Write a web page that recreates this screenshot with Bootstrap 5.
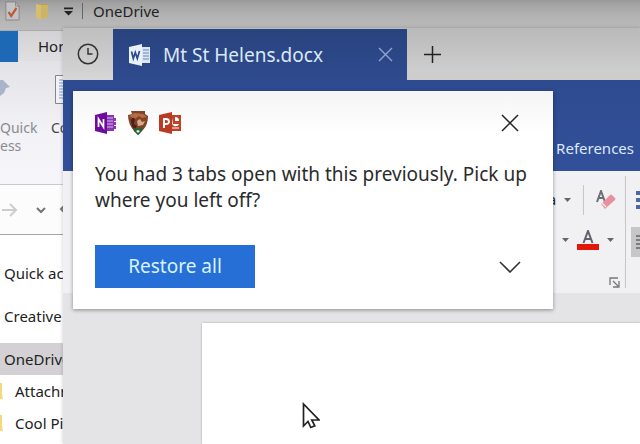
<!DOCTYPE html>
<html lang="en">
<head>
<meta charset="utf-8">
<meta name="viewport" content="width=device-width, initial-scale=1">
<title>Mt St Helens.docx</title>
<link href="https://cdn.jsdelivr.net/npm/bootstrap@5.3.0/dist/css/bootstrap.min.css" rel="stylesheet">
<style>
body { font-family: "Noto Sans", "Open Sans", sans-serif; font-size: 15px; line-height: 20px; color: #222; background: #fff; }
button { font-family: inherit; padding: 0; border: 0; background: none; color: inherit; }
svg { display: block; flex: none; }
.desktop { min-height: 100vh; }
.ex-title { height: 30px; padding: 0 1px 8px; background: linear-gradient(#989898, #a2a2a2 12%, #b2b2b2 50%, #bcbcbc); }
.ex-title .sep { width: 1px; height: 16px; background: #666; margin: 0 10px 0 9px; }
.ex-tabs { height: 31px; border-top: 1px solid #aaa; background: linear-gradient(#d2d2d4, #e0e0e4); }
.ex-file { width: 18px; height: 31px; background: #1e69b5; }
.ex-home { margin-left: 20px; }
.ex-ribbon { height: 124px; padding-top: 14px; background: linear-gradient(#e2e2e7, #f2f2f7 60%, #f6f6fa); border-bottom: 1px solid #c9c9cd; font-size: 14px; }
.ex-ribbon .pin { color: #8b8b8f; line-height: 18px; width: 38px; }
.ex-ribbon .copy { margin-left: 13px; line-height: 18px; color: #444; }
.ex-ribbon .pic { height: 44px; }
.ex-nav { height: 50px; border-bottom: 1px solid #a5a5a5; background: #fcfcfd; }
.ex-tree { padding-top: 22px; }
.ex-tree a { height: 32px; color: #222; }
.ex-tree .top { padding-left: 4px; margin-bottom: 11px; }
.ex-tree .sel { background: #d3d1d4; padding-left: 4px; }
.ex-tree .sub { gap: 12px; }
.word { position: absolute; left: 63px; top: 28px; right: 0; bottom: 0; background: #e4e4e7; box-shadow: 0 0 4px #0003; }
.strip { height: 52px; background: linear-gradient(#b9b9b9, #cdcdcd 80%, #cfcdcc); }
.hist { width: 50px; color: #333; background: linear-gradient(#bfbfc0, #d6d6d6); }
.doc-tab { width: 294px; margin-top: 1px; padding: 0 14px 0 16px; background: linear-gradient(#29437e, #2e4b8f); color: #dde8f8; font-size: 19px; }
.plus { width: 51px; color: #222; }
.w-head { height: 91px; padding: 0 6px 13px; background: linear-gradient(#2e4b90, #32509a); }
.w-head a { color: #dce9ff; }
.w-ribbon { height: 122px; padding: 5px 0; background: #f1f1f4; font-size: 14px; }
.font-group { padding: 9px 5px 0 0; }
.font-group .line { height: 30px; }
.font-group .line + .line { padding-right: 6px; }
.font-group .split { margin: 0 8px 0 12px; }
.vr-a { width: 1px; background: #c6c6c9; }
.para-group { width: 14px; padding: 15px 0 0 5px; }
.para-group .list-btn { width: 9px; height: 18px; padding-left: 5px; margin-bottom: 18px; }
.para-group .align-btn { width: 9px; height: 30px; background: #c6c6c8; padding-left: 5px; }
.sheet { margin: 30px 0 0 139px; background: #fff; box-shadow: 0 0 2px #0004; }
.toast-card { position: absolute; left: 73px; top: 91px; width: 480px; padding: 19px 22px 21px; border-radius: 0; background: linear-gradient(#f5f5f6, #fff 20%); box-shadow: 0 1px 4px #0006; color: #2b2b2b; }
.toast-card p { font-size: 19px; line-height: 26px; margin: 25px 0 32px; white-space: nowrap; }
.glyph-btn { width: 26px; }
.restore { width: 160px; height: 43px; border-radius: 0; background: #266fd6; color: #d9f3ff; font-size: 19px; }
.restore:hover { background: #1f62c2; color: #fff; }
.pointer { position: absolute; left: 302px; top: 402px; }
</style>
<script src="https://cdn.jsdelivr.net/npm/bootstrap@5.3.0/dist/js/bootstrap.bundle.min.js"></script>
</head>
<body>
<div class="desktop position-relative overflow-hidden">

<section aria-label="File Explorer">
  <header class="ex-title d-flex align-items-center">
    <svg class="ms-1" width="15" height="20" viewBox="0 0 17 20" preserveAspectRatio="none"><path d="M1 1h11l4 4v14H1z" fill="#c3c3c5" stroke="#858585"/><path d="M12 1v4h4" fill="none" stroke="#858585"/><path d="m4 11 3 4 6-8" fill="none" stroke="#bd5a2d" stroke-width="2.4"/></svg>
    <svg class="ms-3" width="12" height="19" viewBox="0 0 12 19"><path d="M2 2h10v13H2z" fill="#b89f55"/><path d="m0 2 5 1v15l-5-2z" fill="#d6bd70"/><path d="M5 3h7v13H5z" fill="#cdb366"/></svg>
    <svg class="ms-3" width="9" height="9" viewBox="0 0 10 9"><path d="M0 0h10v2H0zM0 4h10L5 9z" fill="#222"/></svg>
    <span class="sep"></span><span>OneDrive</span>
  </header>
  <nav class="ex-tabs d-flex align-items-center"><span class="ex-file"></span><a class="ex-home text-decoration-none text-reset" href="#">Home</a></nav>
  <div class="ex-ribbon d-flex">
    <div class="pin text-nowrap d-flex flex-column">
      <div class="pic"><svg width="11" height="28" viewBox="0 0 11 28"><path d="m0 5 3 0 7 7-4 1-2 5-4 3z" fill="#a9b4c8"/></svg></div>
      <span>Quick</span><span>ess</span>
    </div>
    <div class="copy">
      <div class="pic"><svg class="ms-1" width="22" height="29" viewBox="0 0 22 29"><path d="M.5.5h21v28H.5z" fill="#f2f2f5" stroke="#85868c"/><path d="M4 5h16M4 8h16M4 11h16M4 14h16M4 17h16M4 20h16M4 23h16" stroke="#a4bbdc" stroke-width="1.5"/></svg></div>
      <span>Copy</span>
    </div>
  </div>
  <div class="ex-nav d-flex align-items-center">
    <svg width="64" height="16" viewBox="0 0 64 16"><path d="M2 8h14M10 2l6 6-6 6" fill="none" stroke="#cdcdd0" stroke-width="2"/><path d="m37 6 4 4 4-4M64 4l-3 3 3 3" fill="none" stroke="#747477" stroke-width="2"/></svg>
  </div>
  <nav class="ex-tree d-flex flex-column">
    <a class="top d-flex align-items-center text-decoration-none" href="#">Quick access</a>
    <a class="top d-flex align-items-center text-decoration-none" href="#">Creative Cloud</a>
    <a class="sel d-flex align-items-center text-decoration-none" href="#">OneDrive</a>
    <a class="sub d-flex align-items-center text-decoration-none" href="#"><svg width="3" height="16" viewBox="0 0 3 16"><path d="M0 0h2v10l1 6H0z" fill="#f5d97f"/></svg>Attachments</a>
    <a class="sub d-flex align-items-center text-decoration-none" href="#"><svg width="3" height="16" viewBox="0 0 3 16"><path d="M0 0h2v10l1 6H0z" fill="#f5d97f"/></svg>Cool Pictures</a>
  </nav>
</section>

<section class="word d-flex flex-column" aria-label="Word">
  <div class="strip d-flex">
    <button class="hist d-flex align-items-center justify-content-center" aria-label="History"><svg width="22" height="22" viewBox="0 0 22 22"><circle cx="11" cy="11" r="9.7" fill="none" stroke="currentColor" stroke-width="1.5"/><path d="M11 5v6h4.500" fill="none" stroke="currentColor" stroke-width="1.500"/></svg></button>
    <div class="doc-tab d-flex align-items-center">
      <svg width="22" height="22" viewBox="0 0 22 22"><path d="M12 3h9v16h-9z" fill="#dce6f4"/><path d="M14 6h6M14 9h6M14 12h6M14 15h6" stroke="#6b84b6"/><path d="M0 3 13 0v22L0 19z" fill="#e8f0f8"/><path d="m2.500 7.500 1.800 7 2-6 2 6 2.200-7.500" fill="none" stroke="#2c488b" stroke-width="1.700"/></svg>
      <span class="flex-grow-1 ms-2 ps-1 text-nowrap">Mt St Helens.docx</span>
      <button aria-label="Close tab"><svg width="15" height="15" viewBox="0 0 15 15"><path d="m1 1 13 13M14 1 1 14" stroke="#91a5d2" stroke-width="1.400"/></svg></button>
    </div>
    <button class="plus d-flex align-items-center justify-content-center" aria-label="New tab"><svg width="17" height="17" viewBox="0 0 17 17"><path d="M8.500 0v17M0 8.500h17" stroke="currentColor" stroke-width="1.500"/></svg></button>
  </div>
  <nav class="w-head d-flex align-items-end justify-content-end"><a class="text-decoration-none" href="#">References</a></nav>
  <div class="w-ribbon d-flex">
    <div class="font-group flex-grow-1 d-flex flex-column align-items-end">
      <div class="line d-flex align-items-center pe-1">
        <span>Aa</span><svg class="ms-2" width="7" height="4" viewBox="0 0 7 4"><path d="M0 0h7L3.500 4z" fill="#666"/></svg>
        <span class="vr-a split h-100"></span>
        <svg class="ms-1" width="20" height="20" viewBox="0 0 20 20"><path d="m1 12 4-11 4 11M2.500 8h5" fill="none" stroke="#6e6e76" stroke-width="2"/><path d="m5 14 9-9q1-1 2 0l3 3q1 1 0 2l-9 8-1 1z" fill="#e9909f"/><path d="m5 12 5 5" stroke="#f4f0f3" stroke-width="1.300"/></svg>
      </div>
      <div class="line d-flex align-items-center mt-2 pt-1">
        <svg width="7" height="4" viewBox="0 0 7 4"><path d="M0 0h7L3.500 4z" fill="#666"/></svg>
        <svg class="ms-2 me-2" width="22" height="20" viewBox="0 0 22 20"><path d="m6.500 13 4.500-12 4.500 12M8 9h6" fill="none" stroke="#62626a" stroke-width="2"/><path d="M0 14h22v6H0z" fill="#e11708"/></svg>
        <svg width="7" height="4" viewBox="0 0 7 4"><path d="M0 0h7L3.500 4z" fill="#666"/></svg>
      </div>
      <svg class="mt-auto" width="11" height="11" viewBox="0 0 11 11"><path d="M1 8V1h8M4 4l5 5M10 4v6H4" fill="none" stroke="#777" stroke-width="1.300"/></svg>
    </div>
    <span class="vr-a"></span>
    <div class="para-group">
      <svg class="list-btn" viewBox="0 0 4 18" preserveAspectRatio="none"><path d="M0 0h4v4H0zM0 7h4v4H0zM0 14h4v4H0z" fill="#4c6a9f"/></svg>
      <div class="align-btn d-flex align-items-center"><svg width="4" height="15" viewBox="0 0 4 15"><path d="M0 1h4M0 5h4M0 9h4M0 13h4" stroke="#666" stroke-width="1.500"/></svg></div>
    </div>
  </div>
  <main class="sheet flex-grow-1"></main>
</section>

<section class="toast-card" role="dialog" aria-labelledby="msg">
  <div class="d-flex align-items-center">
    <svg width="22" height="22" viewBox="0 0 22 22"><path d="M11 3h8v3h2v3h-2v1h2v3h-2v1h2v3h-2v2h-8z" fill="#8a35b5"/><path d="M12 6h6M12 9h6M12 12h6M12 15h6" stroke="#d9b8eb"/><path d="M0 3 12 0v22L0 19z" fill="#6e0b9b"/><path d="M3.500 15V7l5 8V7" fill="none" stroke="#fff" stroke-width="1.700"/></svg>
    <svg class="ms-2" width="26" height="26" viewBox="0 0 26 26"><path d="M6 1h14v3l3 2q0 9-5 14l-5 5-4-4Q3 14 3 5l4-1z" fill="#824326"/><path d="m4 6 5-3 9 1 4 3-5 1-3-2-4 3z" fill="#b36d49"/><path d="M6 10q2-4 4-1l-1 5 3 2-2 4q-4-4-4-10z" fill="#482417"/><path d="m12 11 3-2 2 3 3-1-2 4-5 1z" fill="#d9a98c"/><path d="m9 18 4 1 5-2-2 5-3 3-4-4z" fill="#18683f"/><path d="m11 21 2-1 2 1-2 2z" fill="#e4eee2"/></svg>
    <svg class="ms-2" width="22" height="22" viewBox="0 0 22 22"><path d="M11 3h11v16H11z" fill="#bd4227"/><path d="M14 6v6h6q-1 3-5 2l-2-2zM16 5q4 0 4 4h-4z" fill="#fff"/><path d="M13 16h7" stroke="#f4d1c6" stroke-width="1.300"/><path d="M0 3 13 0v22L0 19z" fill="#b93b24"/><path d="M5 16V7h2q3 0 3 2.500T7 12H5" fill="none" stroke="#fff" stroke-width="1.900"/></svg>
    <button class="glyph-btn ms-auto me-2 d-flex justify-content-center" aria-label="Close"><svg width="18" height="18" viewBox="0 0 18 18"><path d="m1 1 16 16M17 1 1 17" stroke="#222" stroke-width="1.500"/></svg></button>
  </div>
  <p id="msg">You had 3 tabs open with this previously. Pick up<br>where you left off?</p>
  <div class="d-flex align-items-center justify-content-between">
    <button class="restore btn">Restore all</button>
    <button class="glyph-btn me-2 d-flex justify-content-center" aria-label="Show tabs"><svg width="22" height="12" viewBox="0 0 22 12"><path d="m1 1 10 10L21 1" fill="none" stroke="#333" stroke-width="1.600"/></svg></button>
  </div>
</section>

<svg class="pointer" width="18" height="28" viewBox="0 0 18 28"><path d="M1.500 2v22l4.500-4.500 2.800 6 4-1.700-3-5.800H17z" fill="#fff" stroke="#222" stroke-width="1.700"/></svg>
</div>
</body>
</html>
